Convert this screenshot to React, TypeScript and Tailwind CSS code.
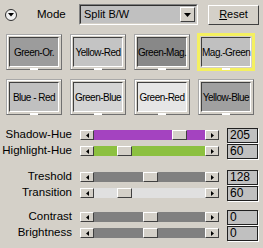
const presets = [
  { label: "Green-Or.", bg: "bg-[#9c9c9c]" },
  { label: "Yellow-Red", bg: "bg-[#c4c4c4]" },
  { label: "Green-Mag.", bg: "bg-[#888888]" },
  { label: "Mag.-Green", bg: "bg-[#c0c0c0]", active: true },
  { label: "Blue - Red", bg: "bg-[#c0c0c0]" },
  { label: "Green-Blue", bg: "bg-[#d4d4d4]" },
  { label: "Green-Red", bg: "bg-[#e6e6e6]" },
  { label: "Yellow-Blue", bg: "bg-[#a0a0a0]" },
];

const groups = [
  [
    { label: "Shadow-Hue", value: 205, min: 0, max: 255, track: "bg-[#a443c0]" },
    { label: "Highlight-Hue", value: 60, min: 0, max: 255, track: "bg-[#8cc040]" },
  ],
  [
    { label: "Treshold", value: 128, min: 0, max: 255, track: "bg-[#808080]" },
    { label: "Transition", value: 60, min: 0, max: 255, track: "bg-[#e0e0e0]" },
  ],
  [
    { label: "Contrast", value: 0, min: -100, max: 100, track: "bg-[#808080]" },
    { label: "Brightness", value: 0, min: -100, max: 100, track: "bg-[#808080]" },
  ],
];

const raised =
  "border border-t-white border-l-white border-b-[#404040] border-r-[#404040] bg-[#d4d0c8]";

function Arrow({ dir }: { dir: "left" | "right" }) {
  return (
    <div className={`flex h-full w-[14px] items-center justify-center ${raised}`}>
      <svg width="3" height="5" viewBox="0 0 3 5">
        {dir === "left" ? (
          <polygon points="3,0 3,5 0,2.5" fill="#000" />
        ) : (
          <polygon points="0,0 0,5 3,2.5" fill="#000" />
        )}
      </svg>
    </div>
  );
}

function Slider({ value, min, max, track }: { value: number; min: number; max: number; track: string }) {
  const span = 111 - 14;
  const left = Math.round(((value - min) / (max - min)) * span);
  return (
    <div className="flex h-[10px] w-[139px]">
      <Arrow dir="left" />
      <div className={`relative h-full flex-1 ${track}`}>
        <div className={`absolute top-0 h-full w-[15px] ${raised}`} style={{ left }} />
      </div>
      <Arrow dir="right" />
    </div>
  );
}

export default function App() {
  return (
    <div
      className="h-[248px] w-[263px] overflow-hidden bg-[#d4d0c8] text-[11px] text-black"
      style={{ fontFamily: '"Liberation Sans", Arial, sans-serif' }}
    >
      <div className="box-content flex h-[21px] items-center pl-[5px] pt-[4px]">
        <div className="flex h-[12px] w-[12px] items-center justify-center rounded-full border border-[#303030] bg-[#f0f0f0]">
          <svg width="6" height="4" viewBox="0 0 6 4">
            <polygon points="0,0 6,0 3,3.5" fill="#000" />
          </svg>
        </div>
        <span className="ml-[20px] w-[42px] text-[11.5px]">Mode</span>
        <div className="flex h-[21px] w-[119px] items-center border border-t-[#808080] border-l-[#808080] border-b-white border-r-white">
          <div className="flex h-full w-full items-center border border-t-[#303030] border-l-[#303030] border-b-[#d4d0c8] border-r-[#d4d0c8] bg-[#c0c0c0] pl-[3px]">
            <span className="flex-1">Split B/W</span>
            <div className={`mr-[1px] flex h-[15px] w-[15px] items-center justify-center ${raised}`}>
              <svg width="7" height="4" viewBox="0 0 7 4">
                <polygon points="0,0 7,0 3.5,4" fill="#000" />
              </svg>
            </div>
          </div>
        </div>
        <button className={`ml-[10px] flex h-[20px] w-[51px] items-center justify-center ${raised}`}>
          <span>
            <span className="underline">R</span>eset
          </span>
        </button>
      </div>

      <div className="mt-[9px] grid grid-cols-4 gap-x-[8px] gap-y-[9px] pl-[6px] pr-[9px]">
        {presets.map((p) => (
          <div
            key={p.label}
            className={`relative flex h-[36px] w-[56px] p-[2px] ${
              p.active
                ? "border border-[#f4f060] shadow-[0_0_0_1px_#f4f060,inset_0_0_0_1px_#f4f060]"
                : "border border-t-[#a8a8a8] border-l-[#a8a8a8] border-b-[#707070] border-r-[#707070] shadow-[inset_1px_1px_0_#fff]"
            }`}
          >
            <div
              className={`flex flex-1 items-center justify-center whitespace-nowrap border border-t-[#404040] border-l-[#404040] border-b-white border-r-white text-[10px] tracking-[-0.5px] ${p.bg}`}
            >
              {p.label}
            </div>
            <div className="absolute bottom-[-1px] left-1/2 h-[2px] w-[8px] -translate-x-1/2 bg-white" />
          </div>
        ))}
      </div>

      <div className="mt-[12px] flex flex-col gap-[10px]">
        {groups.map((g, gi) => (
          <div key={gi} className={`flex flex-col ${gi === 2 ? "-mt-[2px]" : ""}`}>
            {g.map((s) => (
              <div key={s.label} className="flex h-[16px] items-center">
                <span className="w-[72px] text-right text-[11.5px]">{s.label}</span>
                <div className="ml-[8px]">
                  <Slider value={s.value} min={s.min} max={s.max} track={s.track} />
                </div>
                <div className="ml-[8px] flex h-[15px] w-[31px] items-center border border-[#202020] bg-[#c0c0c0] pl-[2px] text-[12px] shadow-[1px_1px_0_#fff]">
                  {s.value}
                </div>
              </div>
            ))}
          </div>
        ))}
      </div>
    </div>
  );
}
